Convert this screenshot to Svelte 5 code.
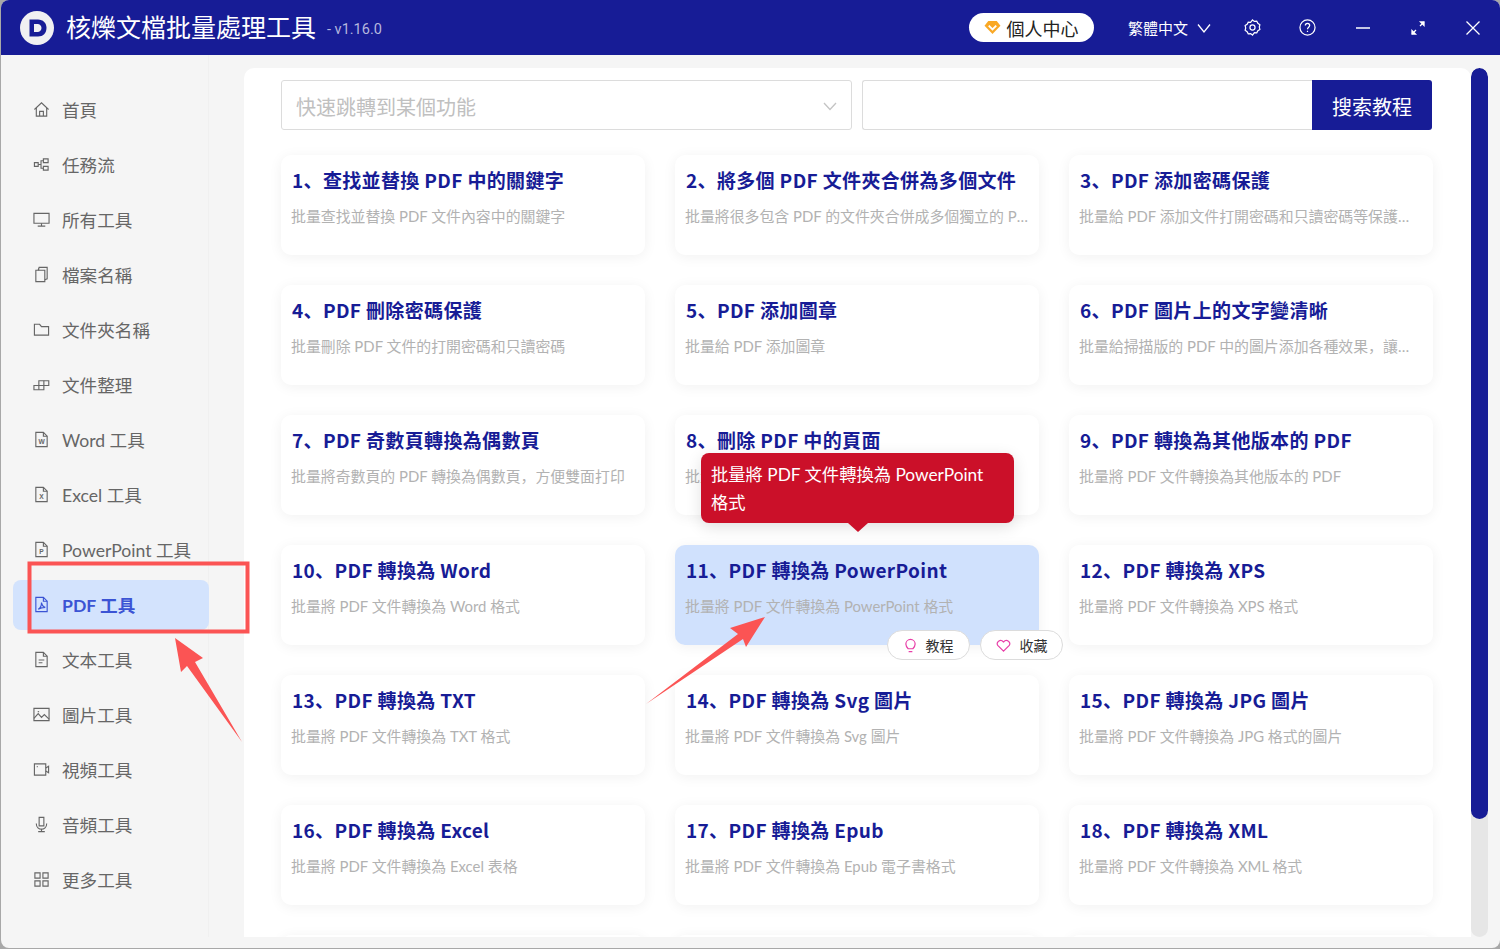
<script>
	const nav = [
		{ label: '首頁', icon: ['M1.5 9 9 2l7.5 7', 'M3.5 7.5V16h11V7.5', 'M7 16v-5h4v5'] },
		{ label: '任務流', icon: ['M1.5 7h4v4h-4z', 'M11 3h5v4h-5z', 'M11 11h5v4h-5z', 'M5.5 9h3M11 5H8.5v8H11'] },
		{ label: '所有工具', icon: ['M1 2.5h16v10.5H1z', 'M9 13v3', 'M5 16h8'] },
		{ label: '檔案名稱', icon: ['M3 4.5h9.5v12H3z', 'M5.5 4.5l1-3h8.5v12l-2.5 1', 'M6 4.5V3'] },
		{ label: '文件夾名稱', icon: ['M1.5 3.5h5.5l2 2.5h7.5v9h-15z'] },
		{ label: '文件整理', icon: ['M1 10h10.5v4.5H1z', 'M6.2 10v4.5', 'M6.2 10V5h10.5v5h-5.2', 'M11.5 5v5'] },
		{ label: 'Word 工具', icon: ['M3 1.5h8l4 4v11H3z', 'M11 1.5v4h4'], letter: 'W' },
		{ label: 'Excel 工具', icon: ['M3 1.5h8l4 4v11H3z', 'M11 1.5v4h4'], letter: 'X' },
		{ label: 'PowerPoint 工具', icon: ['M3 1.5h8l4 4v11H3z', 'M11 1.5v4h4'], letter: 'P' },
		{ label: 'PDF 工具', icon: ['M3 1.5h8l4 4v11H3z', 'M11 1.5v4h4', 'M5.5 14c2-1 3.5-4 3.5-7 .5 3 2 4.500 4 5-2.500 0-5 .5-7.500 2z'], active: true },
		{ label: '文本工具', icon: ['M3 1.5h8l4 4v11H3z', 'M11 1.500v4h4', 'M6 9.500h6M6 12.500h4'] },
		{ label: '圖片工具', icon: ['M1 2.500h16v13H1z', 'M1 13l4.500-5 3.500 4 3-3 5 5', 'M5 6h1.500'] },
		{ label: '視頻工具', icon: ['M1.500 3h12v12h-12z', 'M13.500 7.500l3-2v7l-3-2', 'M4 6h1'] },
		{ label: '音頻工具', icon: ['M6.500 1.500h5v9h-5z', 'M3.500 8c0 8 11 8 11 0', 'M9 13.500v3', 'M5.500 16.500h7'] },
		{ label: '更多工具', icon: ['M2 2h5.500v5.500H2z', 'M10.500 2H16v5.500h-5.500z', 'M2 10.500h5.500V16H2z', 'M10.500 10.500H16V16h-5.500z'] }
	];

	const cards = [
		['1、查找並替換 PDF 中的關鍵字', '批量查找並替換 PDF 文件內容中的關鍵字'],
		['2、將多個 PDF 文件夾合併為多個文件', '批量將很多包含 PDF 的文件夾合併成多個獨立的 PDF 文件'],
		['3、PDF 添加密碼保護', '批量給 PDF 添加文件打開密碼和只讀密碼等保護措施，防止文件被他人查看'],
		['4、PDF 刪除密碼保護', '批量刪除 PDF 文件的打開密碼和只讀密碼'],
		['5、PDF 添加圖章', '批量給 PDF 添加圖章'],
		['6、PDF 圖片上的文字變清晰', '批量給掃描版的 PDF 中的圖片添加各種效果，讓文字變得更清晰'],
		['7、PDF 奇數頁轉換為偶數頁', '批量將奇數頁的 PDF 轉換為偶數頁，方便雙面打印'],
		['8、刪除 PDF 中的頁面', '批量刪除 PDF 文件中的指定頁面'],
		['9、PDF 轉換為其他版本的 PDF', '批量將 PDF 文件轉換為其他版本的 PDF'],
		['10、PDF 轉換為 Word', '批量將 PDF 文件轉換為 Word 格式'],
		['11、PDF 轉換為 PowerPoint', '批量將 PDF 文件轉換為 PowerPoint 格式'],
		['12、PDF 轉換為 XPS', '批量將 PDF 文件轉換為 XPS 格式'],
		['13、PDF 轉換為 TXT', '批量將 PDF 文件轉換為 TXT 格式'],
		['14、PDF 轉換為 Svg 圖片', '批量將 PDF 文件轉換為 Svg 圖片'],
		['15、PDF 轉換為 JPG 圖片', '批量將 PDF 文件轉換為 JPG 格式的圖片'],
		['16、PDF 轉換為 Excel', '批量將 PDF 文件轉換為 Excel 表格'],
		['17、PDF 轉換為 Epub', '批量將 PDF 文件轉換為 Epub 電子書格式'],
		['18、PDF 轉換為 XML', '批量將 PDF 文件轉換為 XML 格式'],
		['', ''],
		['', ''],
		['', '']
	];
	const hoverIndex = 10;
</script>

<div class="window">
	<header class="titlebar">
		<svg class="logo" viewBox="0 0 34 34">
			<circle cx="17" cy="17" r="17" fill="#f0f0f2" />
			<path d="M9.500 8.500h8.500c5 0 8.500 3.500 8.500 8.500s-3.500 8.500-8.500 8.500H9.500z" fill="#171c96" />
			<path d="M14 13h3.500c2.300 0 4 1.700 4 4s-1.700 4-4 4H14z" fill="#f0f0f2" />
		</svg>
		<span class="app-name">核爍文檔批量處理工具</span>
		<span class="version">- v1.16.0</span>

		<div class="bar-right">
			<button class="vip">
				<svg viewBox="0 0 18 16" width="17" height="15">
					<path d="M4.500 1h9L17.500 6 9 15 .5 6z" fill="#f9a825" />
					<path d="M5 6l4 4 4-4" fill="none" stroke="#fff" stroke-width="2" />
				</svg>
				個人中心
			</button>
			<span class="lang">繁體中文</span>
			<svg class="bar-icon chevron" viewBox="0 0 14 14"><path d="M1 3.500 7 11l6-7.500" /></svg>
			<svg class="bar-icon gear" viewBox="0 0 18 18">
				<path d="M9 1l2 1.600 2.500-.3 1.200 2.300 2.100 1.400-.6 2.500.6 2.500-2.100 1.400-1.200 2.300-2.500-.3L9 17l-2-1.600-2.500.3-1.200-2.300-2.100-1.400.6-2.500-.6-2.500 2.100-1.400 1.200-2.300 2.500.3z" />
				<circle cx="9" cy="9" r="2.700" />
			</svg>
			<svg class="bar-icon help" viewBox="0 0 18 18">
				<circle cx="9" cy="9" r="8" />
				<path d="M6.700 7c0-3 4.600-3 4.600 0 0 1.800-2.300 1.800-2.300 3.800" />
				<path d="M9 12.500v1.200" />
			</svg>
			<svg class="bar-icon minimize" viewBox="0 0 14 14"><path d="M0 7h14" /></svg>
			<svg class="bar-icon expand" viewBox="0 0 14 14">
				<path d="M1 13l4-4M9 5l4-4" />
				<path d="M1 13V9.500L4.500 13zM13 1v3.500L9.500 1z" fill="#fff" />
			</svg>
			<svg class="bar-icon close" viewBox="0 0 14 14"><path d="M.5.500l13 13M13.500.500l-13 13" /></svg>
		</div>
	</header>

	<div class="body">
		<nav class="sidebar">
			{#each nav as item}
				<div class="nav-item" class:active={item.active}>
					<svg class="nav-icon" viewBox="0 0 18 18">
						{#each item.icon as d}
							<path {d} />
						{/each}
						{#if item.letter}
							<text x="9" y="13.500" text-anchor="middle">{item.letter}</text>
						{/if}
					</svg>
					<span>{item.label}</span>
				</div>
			{/each}
		</nav>

		<main class="content">
			<div class="search-row">
				<div class="select">
					<span>快速跳轉到某個功能</span>
					<svg viewBox="0 0 14 14" width="14" height="14"><path d="M1 4l6 6.500L13 4" fill="none" stroke="#c4c4c4" stroke-width="1.300" /></svg>
				</div>
				<div class="search">
					<div class="search-input"></div>
					<button class="search-btn">搜索教程</button>
				</div>
			</div>

			<div class="grid">
				{#each cards as [title, desc], i}
					<div class="card" class:hover={i === hoverIndex}>
						<div class="card-title">{title}</div>
						<div class="card-desc">{desc}</div>
						{#if i === hoverIndex}
							<div class="tooltip">批量將 PDF 文件轉換為 PowerPoint 格式</div>
							<div class="chips">
								<span class="chip">
									<svg viewBox="0 0 14 16" width="13" height="15"><path d="M4.500 11.500C3 10 2 9 2 6.500a5 5 0 0 1 10 0c0 2.500-1 3.500-2.500 5zM5 14.500h4" /></svg>
									教程
								</span>
								<span class="chip">
									<svg viewBox="0 0 16 14" width="15" height="13"><path d="M8 13 1.800 6.800C-.5 3.500 4.500-.5 8 3.200c3.500-3.700 8.500.3 6.200 3.600z" /></svg>
									收藏
								</span>
							</div>
						{/if}
					</div>
				{/each}
			</div>
		</main>

		<div class="scrollbar"><div class="thumb"></div></div>
	</div>

	<!-- red annotations drawn on top of the screenshot -->
	<svg class="marks" viewBox="0 0 1500 949">
		<rect x="29.500" y="563.500" width="218" height="68" fill="none" stroke="#fb5454" stroke-width="4" />
		<path d="M175 638 203 658 195 662 242 742 187 666 181 672z" fill="#fb5454" />
		<path d="M765 617 730 628 738 634 646 704 743 639 746 647z" fill="#fb5454" />
	</svg>
</div>

<style>
	:global(body) {
		margin: 0;
		background: #a8a8a8;
	}

	.window {
		position: relative;
		width: 1499px;
		height: 948px;
		margin-left: 1px;
		background: #f5f5f5;
		border-radius: 8px;
		overflow: hidden;
		font-family: 'Lato', 'Noto Sans CJK SC', sans-serif;
		display: flex;
		flex-direction: column;
	}

	.titlebar {
		height: 55px;
		flex: none;
		background: #171c96;
		color: #fff;
		display: flex;
		align-items: center;
		padding-left: 19px;
	}

	.logo {
		width: 34px;
		height: 34px;
		margin-right: 12px;
	}

	.app-name {
		font-size: 25px;
		line-height: 55px;
	}

	.version {
		font-size: 14.500px;
		margin-left: 11px;
		padding-top: 3px;
		color: #b5b7de;
		font-family: 'Roboto', sans-serif;
	}

	.bar-right {
		margin-left: auto;
		display: flex;
		align-items: center;
		height: 100%;
	}

	.vip {
		width: 125px;
		height: 29px;
		border: none;
		border-radius: 15px;
		background: #fff;
		color: #222;
		font: inherit;
		font-size: 18px;
		display: flex;
		align-items: center;
		justify-content: center;
		gap: 5px;
		padding: 0;
		margin-right: 34px;
	}

	.lang {
		font-size: 15px;
		margin-right: 9px;
	}

	.bar-icon {
		fill: none;
		stroke: #fff;
		stroke-width: 1.300;
		flex: none;
	}

	.chevron {
		width: 14px;
		height: 14px;
		margin-right: 33px;
	}

	.gear {
		width: 17px;
		height: 17px;
		margin-right: 38px;
	}

	.help {
		width: 17px;
		height: 17px;
		margin-right: 40px;
	}

	.minimize {
		width: 14px;
		height: 14px;
		margin-right: 41px;
	}

	.expand {
		width: 14px;
		height: 14px;
		margin-right: 41px;
	}

	.close {
		width: 14px;
		height: 14px;
		margin-right: 20px;
	}

	.body {
		flex: 1;
		display: flex;
		min-height: 0;
		padding-bottom: 11px;
	}

	.sidebar {
		width: 208px;
		flex: none;
		box-sizing: border-box;
		padding: 30px 0 0 12px;
		margin-right: 35px;
		border-right: 1px solid #f0f0f0;
	}

	.nav-item {
		width: 196px;
		height: 50px;
		margin-bottom: 5px;
		box-sizing: border-box;
		padding: 0 0 2px 20px;
		display: flex;
		align-items: center;
		gap: 12px;
		border-radius: 8px;
		font-size: 17.600px;
		color: #666;
	}

	.nav-item.active {
		background: #d3e3fd;
		color: #3b54d4;
		font-weight: 700;
	}

	.nav-icon {
		width: 17px;
		height: 17px;
		flex: none;
		fill: none;
		stroke: currentColor;
		stroke-width: 1.200;
	}

	.nav-icon text {
		font-family: 'Liberation Sans', sans-serif;
		font-size: 7px;
		font-weight: 700;
		fill: currentColor;
		stroke: none;
	}

	.content {
		width: 1227px;
		flex: none;
		margin-top: 13px;
		box-sizing: border-box;
		padding: 12px 0 0 37px;
		background: #fff;
		border-radius: 10px 10px 0 0;
		overflow: hidden;
	}

	.search-row {
		display: flex;
		gap: 10px;
		width: 1151px;
		height: 50px;
		margin-bottom: 25px;
	}

	.select {
		width: 571px;
		box-sizing: border-box;
		border: 1px solid #dcdcdc;
		border-radius: 3px;
		padding: 2px 14px 0;
		display: flex;
		align-items: center;
		justify-content: space-between;
		font-size: 20px;
		color: #c0c0c0;
	}

	.search {
		flex: 1;
		display: flex;
	}

	.search-input {
		flex: 1;
		border: 1px solid #dcdcdc;
		border-right: none;
		border-radius: 3px 0 0 3px;
	}

	.search-btn {
		width: 120px;
		border: none;
		border-radius: 0 3px 3px 0;
		background: #171c96;
		color: #fff;
		font: inherit;
		font-size: 20px;
		padding: 2px 0 0;
	}

	.grid {
		display: grid;
		grid-template-columns: repeat(3, 364px);
		grid-auto-rows: 100px;
		gap: 30px;
		padding-bottom: 30px;
	}

	.card {
		position: relative;
		box-sizing: border-box;
		padding: 11px 11px 11px 10px;
		background: #fff;
		border-radius: 10px;
		box-shadow: 0 2px 14px rgba(0, 0, 0, 0.06);
	}

	.card.hover {
		background: #d0e1fd;
	}

	.card-title {
		font-family: 'Noto Sans CJK SC', sans-serif;
		font-size: 19px;
		font-weight: 700;
		line-height: 28px;
		color: #171c96;
		letter-spacing: 0.350px;
		white-space: nowrap;
		padding-left: 1px;
	}

	.card-desc {
		margin-top: 12px;
		font-size: 14.900px;
		line-height: 20px;
		color: #b2b2b2;
		white-space: nowrap;
		overflow: hidden;
		text-overflow: ellipsis;
	}

	.tooltip {
		position: absolute;
		left: 26px;
		bottom: 122px;
		width: 313px;
		box-sizing: border-box;
		padding: 8px 10px 6px;
		background: #cb1029;
		border-radius: 8px;
		color: #fff;
		font-size: 17.300px;
		line-height: 28px;
		box-shadow: 0 4px 16px rgba(0, 0, 0, 0.12);
	}

	.tooltip::after {
		content: '';
		position: absolute;
		left: 147px;
		bottom: -9px;
		border-style: solid;
		border-width: 9px 10px 0;
		border-color: #cb1029 transparent transparent;
	}

	.chips {
		position: absolute;
		right: -24px;
		bottom: -15px;
		display: flex;
		gap: 10px;
	}

	.chip {
		width: 83px;
		height: 30px;
		box-sizing: border-box;
		border: 1px solid #dcdcdc;
		border-radius: 15px;
		background: #fff;
		display: flex;
		align-items: center;
		justify-content: center;
		gap: 9px;
		font-size: 14px;
		color: #333;
	}

	.chip svg {
		fill: none;
		stroke: #e83fa8;
		stroke-width: 1.300;
	}

	.scrollbar {
		width: 17px;
		flex: none;
		margin-top: 13px;
		background: #e6e6e6;
		border-radius: 9px;
		overflow: hidden;
	}

	.thumb {
		height: 751px;
		background: #171c96;
		border-radius: 9px;
	}

	.marks {
		position: absolute;
		left: -1px;
		top: 0;
		width: 1500px;
		height: 949px;
		pointer-events: none;
	}
</style>
